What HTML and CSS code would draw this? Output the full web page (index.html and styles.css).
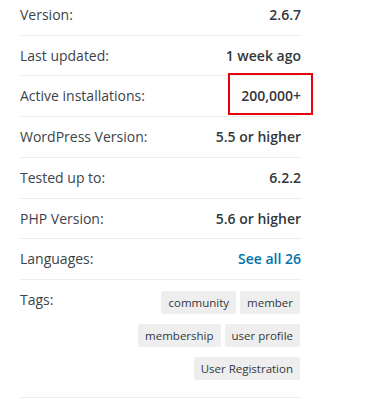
FILE: index.html
```html
<!DOCTYPE html>
<html>
<head>
    <title>Plugin meta</title>
    <link rel="stylesheet" href="styles.css">
</head>
<body>
    <div class="meta">
        <ul class="meta-list">
            <li><span class="label">Version:</span> <strong>2.6.7</strong></li>
            <li><span class="label">Last updated:</span> <strong>1 week ago</strong></li>
            <li><span class="label">Active installations:</span> <strong class="highlight">200,000+</strong></li>
            <li><span class="label">WordPress Version:</span> <strong>5.5 or higher</strong></li>
            <li><span class="label">Tested up to:</span> <strong>6.2.2</strong></li>
            <li><span class="label">PHP Version:</span> <strong>5.6 or higher</strong></li>
            <li><span class="label">Languages:</span> <a href="#" class="languages">See all 26</a></li>
            <li class="tags-row">
                <span class="label">Tags:</span>
                <div class="tags">
                    <a href="#">community</a>
                    <a href="#">member</a>
                    <a href="#">membership</a>
                    <a href="#">user profile</a>
                    <a href="#">User Registration</a>
                </div>
            </li>
        </ul>
    </div>
</body>
</html>
```

FILE: styles.css
```css
body {
    margin: 0;
    padding: 0 20px;
    font-family: "Open Sans", "Liberation Sans", sans-serif;
    font-size: 14px;
    color: #32373c;
    background-color: white;
}
.meta {
    width: 282px;
    margin-top: -5px;
}
.meta-list {
    list-style: none;
    margin: 0;
    padding: 0;
}
.meta-list li {
    display: flex;
    justify-content: space-between;
    align-items: flex-start;
    padding: 10px 0;
    line-height: 19.7px;
    border-bottom: 1px solid #eee;
}
.label {
    color: #3c434a;
}
.meta-list strong {
    font-weight: 600;
    margin-right: 1px;
}
.highlight {
    position: relative;
}
.highlight::after {
    content: "";
    position: absolute;
    left: -13px;
    right: -12px;
    top: -13px;
    bottom: -9px;
    border: 2px solid #e8000b;
}
.languages {
    color: #0073aa;
    font-weight: 600;
    text-decoration: none;
    margin-right: 1px;
}
.meta-list li.tags-row {
    padding-bottom: 17px;
}
.tags {
    display: flex;
    flex-wrap: wrap;
    justify-content: flex-end;
    gap: 10px 4px;
    width: 180px;
    margin-top: 1px;
    margin-right: 2px;
}
.tags a {
    display: block;
    background-color: #eee;
    color: #32373c;
    font-size: 11.5px;
    line-height: 17px;
    padding: 3px 7px;
    border-radius: 2px;
    text-decoration: none;
}
```
